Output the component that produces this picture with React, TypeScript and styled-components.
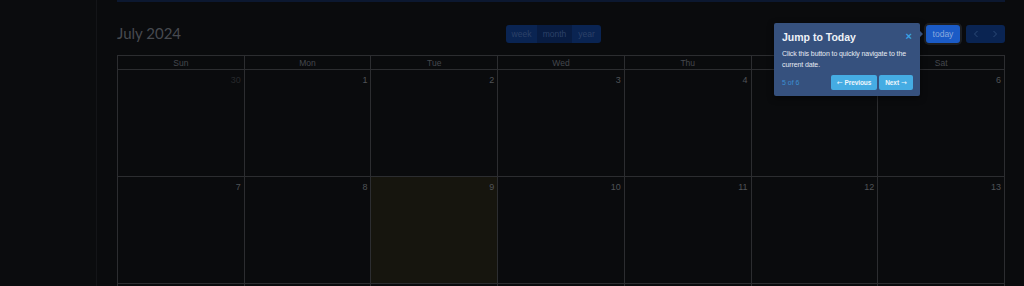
import React from "react";
import styled, { createGlobalStyle } from "styled-components";

const Global = createGlobalStyle`
  html, body { margin: 0; padding: 0; background: #0a0b0d; }
  body { font-family: "Liberation Sans", Arial, sans-serif; overflow: hidden; }
  * { box-sizing: border-box; }
`;

const Page = styled.div`
  display: flex;
  width: 1024px;
  height: 286px;
  overflow: hidden;
  background: #0a0b0d;
`;

const Sidebar = styled.aside`
  width: 97px;
  flex: none;
  background: #0b0c0e;
  border-right: 1px solid #141518;
`;

const Main = styled.main`
  flex: 1;
  position: relative;
  padding: 0 19px 0 20px;
  background: #0a0b0d;
`;

const TopBar = styled.div`
  height: 2px;
  background: #0c1830;
`;

const Toolbar = styled.div`
  display: flex;
  align-items: center;
  justify-content: space-between;
  height: 18px;
  margin-top: 23px;
  margin-bottom: 12px;
`;

const Title = styled.h2`
  margin: 0;
  font-family: Lato, "Liberation Sans", sans-serif;
  font-weight: 400;
  font-size: 15px;
  line-height: 16px;
  margin-top: -2px;
  color: #474a50;
`;

const Group = styled.div`
  display: flex;
  border-radius: 3px;
  overflow: hidden;
`;

const ViewButton = styled.button<{ $active?: boolean; $w: number }>`
  width: ${(p) => p.$w}px;
  height: 18px;
  border: none;
  padding: 0;
  font-family: "Liberation Sans", Arial, sans-serif;
  font-size: 8.5px;
  color: #2c4168;
  background: ${(p) => (p.$active ? "#081c42" : "#0a2452")};
`;

const Right = styled.div`
  display: flex;
  align-items: center;
  gap: 6px;
`;

const TodayButton = styled.button`
  width: 34px;
  height: 18px;
  border: none;
  border-radius: 3px;
  padding: 0;
  font-family: "Liberation Sans", Arial, sans-serif;
  font-size: 8.5px;
  color: #8aa9dd;
  background: #1b5bc6;
  box-shadow: 0 0 0 2px #1c1e22;
`;

const NavButton = styled.button`
  width: 19.5px;
  height: 18px;
  border: none;
  padding: 0;
  display: flex;
  align-items: center;
  justify-content: center;
  background: #0a2452;
  color: #2a4876;
`;

const Table = styled.div`
  display: grid;
  grid-template-columns: repeat(7, 1fr);
  grid-template-rows: 14px 107px 107px 107px;
  border-top: 1px solid #2c2d30;
  border-left: 1px solid #2c2d30;
`;

const Head = styled.div`
  border-right: 1px solid #2c2d30;
  border-bottom: 1px solid #2c2d30;
  font-size: 8.5px;
  color: #45484d;
  display: flex;
  align-items: center;
  justify-content: center;
`;

const Cell = styled.div<{ $today?: boolean }>`
  border-right: 1px solid #2c2d30;
  border-bottom: 1px solid #2c2d30;
  background: ${(p) => (p.$today ? "#16150e" : "transparent")};
  display: flex;
  justify-content: flex-end;
  align-items: flex-start;
  padding: 5px 3px 0 0;
`;

const DayNum = styled.span<{ $other?: boolean }>`
  font-size: 9px;
  line-height: 10px;
  color: ${(p) => (p.$other ? "#27292c" : "#505357")};
`;

const Popover = styled.div`
  position: absolute;
  left: 677px;
  top: 23px;
  width: 146px;
  height: 73px;
  background: #36517e;
  border-radius: 2px;
  padding: 7px 8px 0 8px;
  box-shadow: 0 2px 6px rgba(0, 0, 0, 0.5);
  &::after {
    content: "";
    position: absolute;
    right: -3px;
    top: 8px;
    border-top: 3px solid transparent;
    border-bottom: 3px solid transparent;
    border-left: 3px solid #36517e;
  }
`;

const PopHead = styled.div`
  display: flex;
  justify-content: space-between;
  align-items: center;
  height: 14px;
`;

const PopTitle = styled.div`
  font-weight: 700;
  font-size: 10.5px;
  line-height: 14px;
  color: #eef2f8;
`;

const Close = styled.span`
  font-weight: 700;
  font-size: 11px;
  color: #3aa3e6;
  line-height: 10px;
  margin-top: -2px;
`;

const PopBody = styled.p`
  margin: 4px 0 0 0;
  font-size: 7px;
  line-height: 11px;
  color: #e6ebf3;
  letter-spacing: -0.1px;
`;

const PopFooter = styled.div`
  display: flex;
  align-items: center;
  justify-content: space-between;
  margin-top: 5px;
  margin-right: -1px;
`;

const Progress = styled.span`
  font-size: 7px;
  line-height: 9px;
  color: #3b8fd2;
`;

const Buttons = styled.div`
  display: flex;
  gap: 2px;
`;

const PopButton = styled.button<{ $w: number }>`
  width: ${(p) => p.$w}px;
  height: 15px;
  border: none;
  border-radius: 2px;
  padding: 0;
  display: flex;
  align-items: center;
  justify-content: center;
  gap: 2px;
  font-family: "Liberation Sans", Arial, sans-serif;
  font-weight: 700;
  font-size: 6.5px;
  line-height: 8px;
  color: #eef6fc;
  background: #45ace3;
  letter-spacing: -0.1px;
`;

const Arrow = styled.span`
  font-family: "DejaVu Sans", sans-serif;
  font-size: 7px;
  font-weight: 400;
`;

const Chevron = ({ dir }: { dir: "l" | "r" }) => (
  <svg width="6" height="8" viewBox="0 0 6 8" fill="none">
    <path
      d={dir === "l" ? "M4.5 1 L1.5 4 L4.5 7" : "M1.5 1 L4.5 4 L1.5 7"}
      stroke="currentColor"
      strokeWidth="1"
    />
  </svg>
);

const days = ["Sun", "Mon", "Tue", "Wed", "Thu", "Fri", "Sat"];
const cells = [30, 1, 2, 3, 4, 5, 6, 7, 8, 9, 10, 11, 12, 13];

export default function App() {
  return (
    <Page>
      <Global />
      <Sidebar />
      <Main>
        <TopBar />
        <Toolbar>
          <Title>July 2024</Title>
          <Group>
            <ViewButton $w={31}>week</ViewButton>
            <ViewButton $w={35} $active>
              month
            </ViewButton>
            <ViewButton $w={29}>year</ViewButton>
          </Group>
          <Right>
            <TodayButton>today</TodayButton>
            <Group>
              <NavButton>
                <Chevron dir="l" />
              </NavButton>
              <NavButton>
                <Chevron dir="r" />
              </NavButton>
            </Group>
          </Right>
        </Toolbar>
        <Table>
          {days.map((d) => (
            <Head key={d}>{d}</Head>
          ))}
          {cells.map((n, i) => (
            <Cell key={i} $today={n === 9 && i > 6}>
              <DayNum $other={i === 0}>{n}</DayNum>
            </Cell>
          ))}
          {days.map((d) => (
            <Cell key={`next-${d}`} />
          ))}
        </Table>
        <Popover>
          <PopHead>
            <PopTitle>Jump to Today</PopTitle>
            <Close>×</Close>
          </PopHead>
          <PopBody>Click this button to quickly navigate to the current date.</PopBody>
          <PopFooter>
            <Progress>5 of 6</Progress>
            <Buttons>
              <PopButton $w={46}>
                <Arrow>←</Arrow>
                <span>Previous</span>
              </PopButton>
              <PopButton $w={34}>
                <span>Next</span>
                <Arrow>→</Arrow>
              </PopButton>
            </Buttons>
          </PopFooter>
        </Popover>
      </Main>
    </Page>
  );
}
